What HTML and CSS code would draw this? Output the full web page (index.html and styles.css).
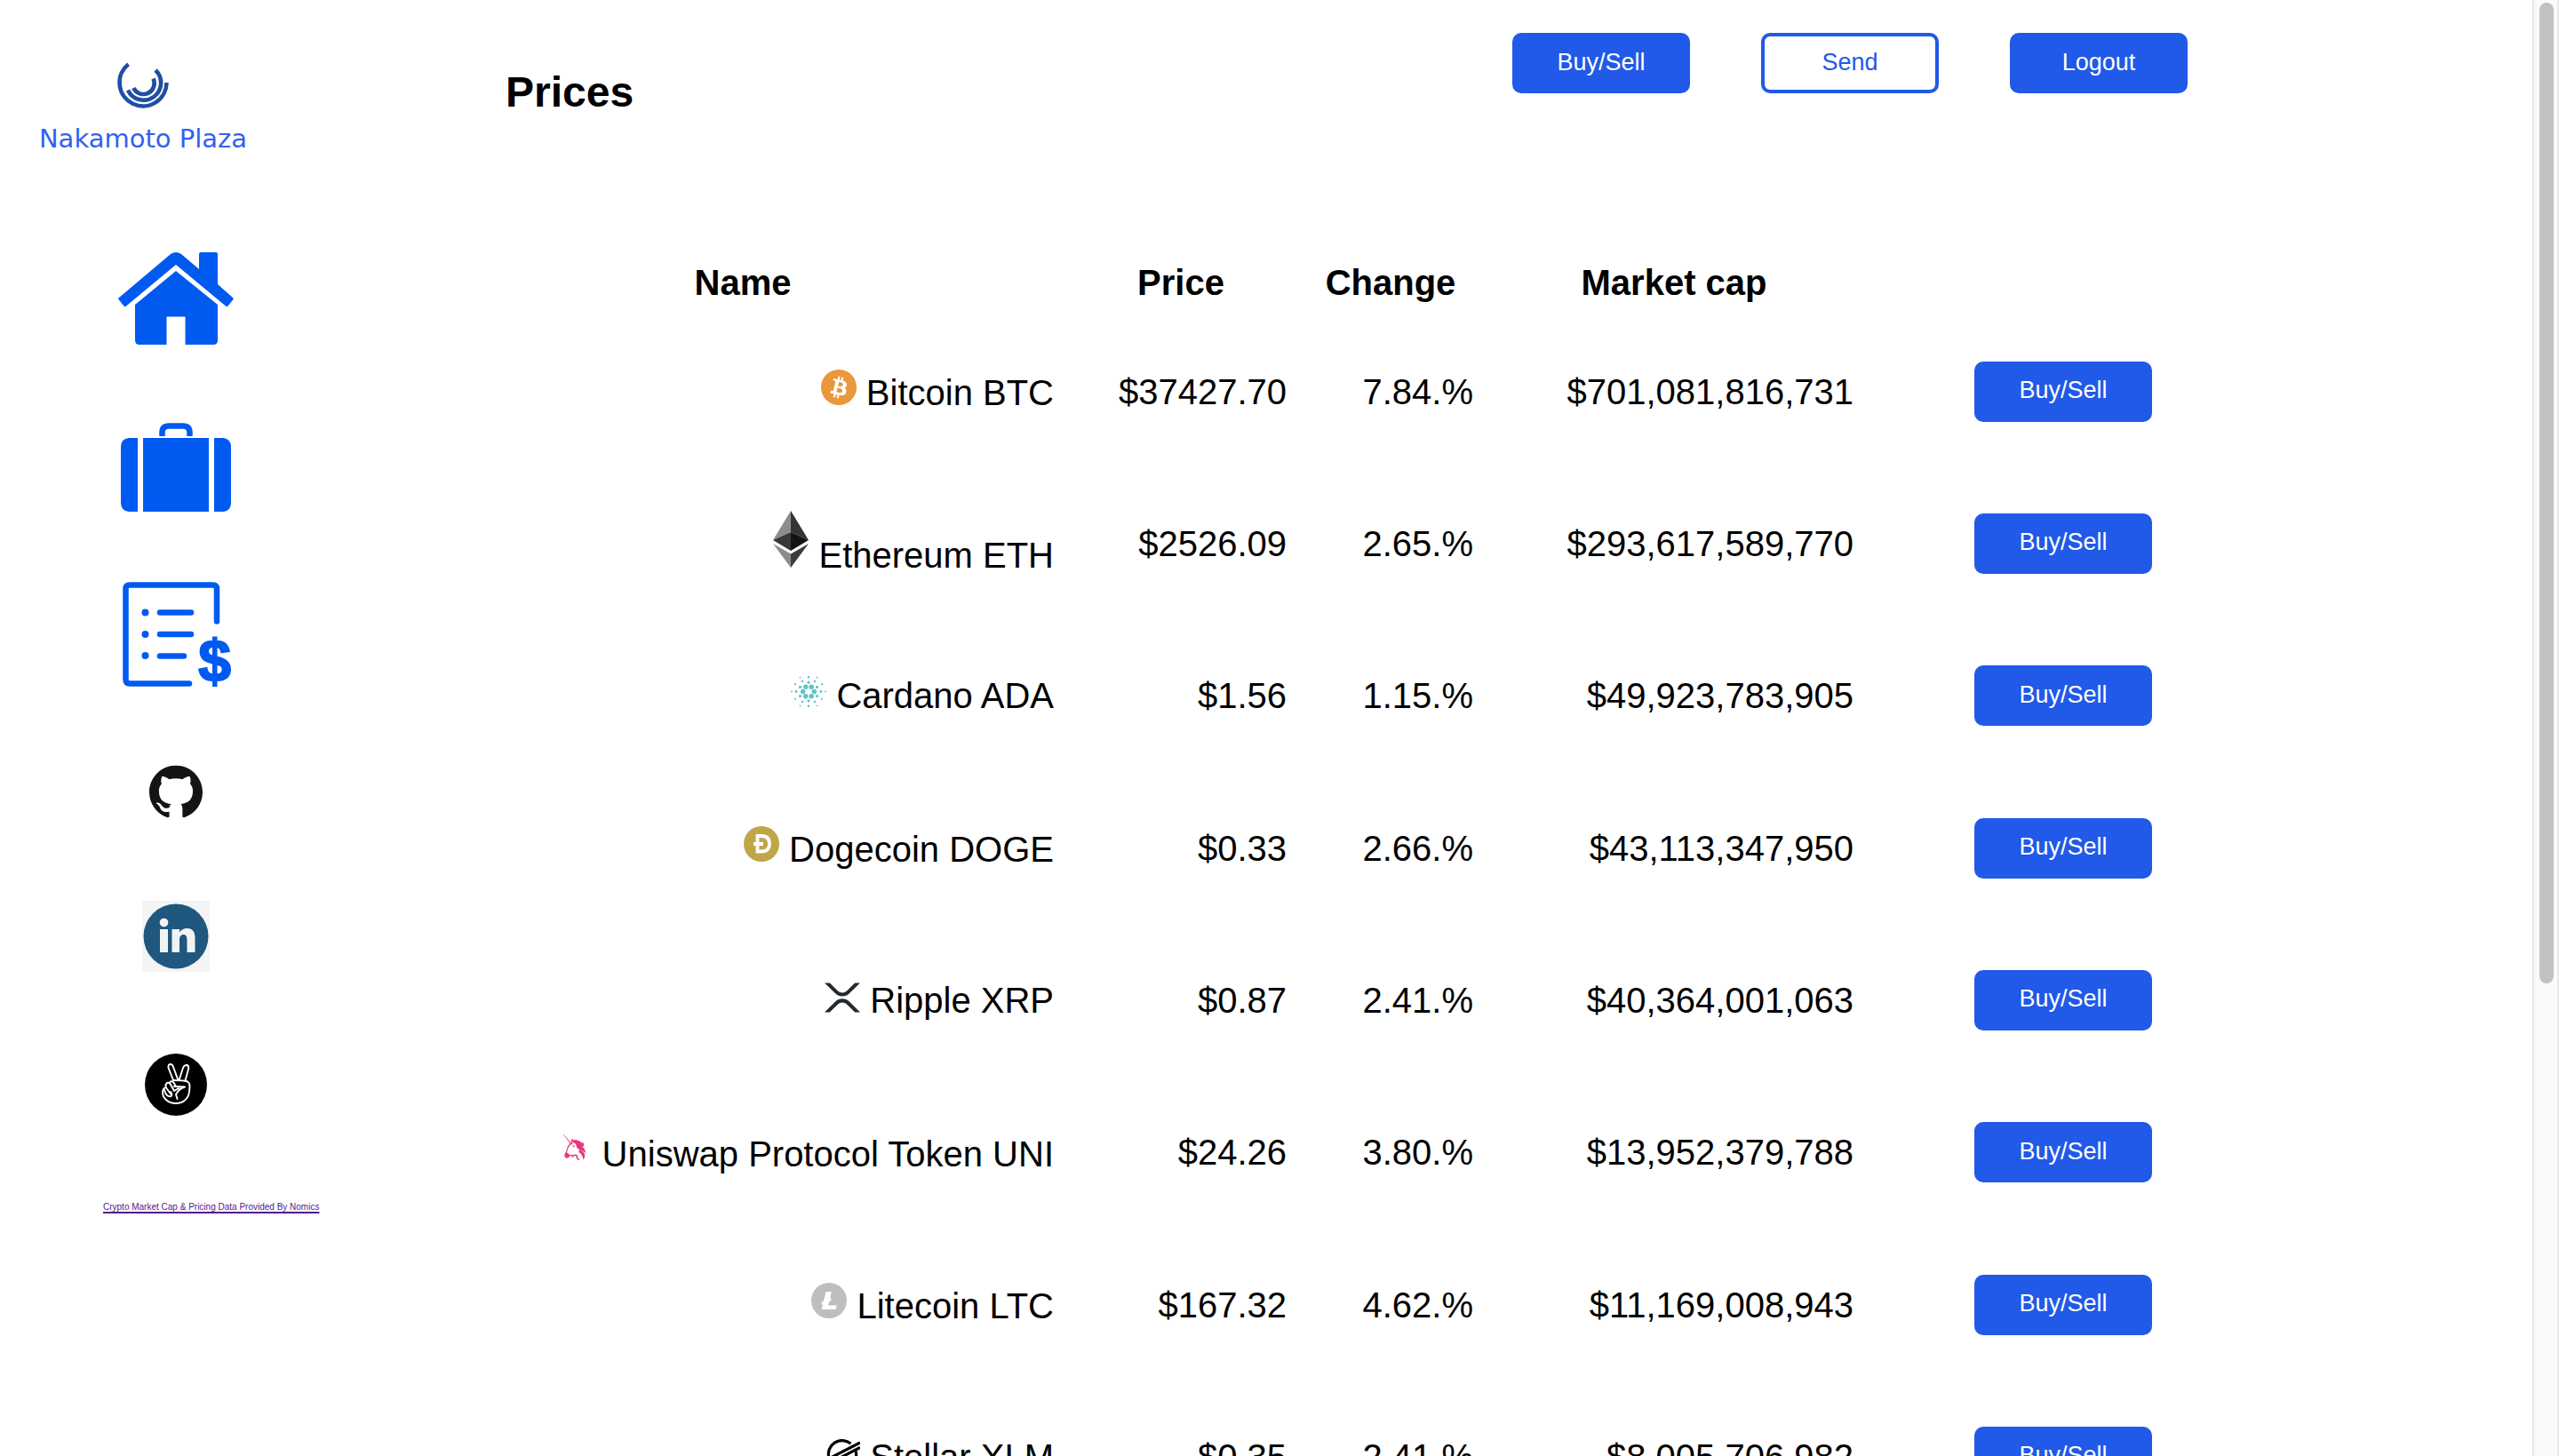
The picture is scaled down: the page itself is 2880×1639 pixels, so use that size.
FILE: index.html
```html
<!DOCTYPE html>
<html lang="en">
<head>
<meta charset="utf-8">
<title>Nakamoto Plaza</title>
<link rel="stylesheet" href="styles.css">
</head>
<body>
<div class="app">
  <aside class="sidebar">
    <a class="brand" href="#">
      <svg class="brand-mark" viewBox="0 0 60 60" aria-hidden="true">
        <g fill="none" stroke="#1f4fa3" stroke-width="4.6">
          <path d="M56.500 30A26.500 26.500 0 1 1 13.500 9.200"/>
          <path d="M44 16A19.500 19.500 0 1 1 13 38.500"/>
          <path d="M41.500 25.500A12.200 12.200 0 0 1 19.300 36"/>
        </g>
      </svg>
      <span class="brand-name">Nakamoto Plaza</span>
    </a>
    <nav class="menu">
      <a href="#" aria-label="Home">
        <svg width="130" height="112" viewBox="132 284 130 112" fill="#005af0">
          <path d="M191 286Q197 282 203 286L223 303V286Q223 284 225 284H242Q244 284 244 286V320L261 335Q262 336 261.500 337L256 344Q254.500 346 253 344.500L197 298L141 344.500Q139.500 346 138 344L132.500 337Q131.500 336 133 335Z"/>
          <path d="M197 305L244 343V383Q244 388 239 388H207.500V356.500H186.500V388H156Q151 388 151 383V343Z"/>
        </svg>
      </a>
      <a href="#" aria-label="Portfolio">
        <svg width="124" height="100" viewBox="136 477 124 100" fill="#005af0">
          <path d="M155 494H145Q136 495 136 504V567Q136 576 145 577H155ZM161 494H235V577H161ZM241 494H251Q260 495 260 504V567Q260 576 251 577H241Z"/>
          <path d="M182.500 492V488Q182.500 480.500 190 480.500H206Q213.500 480.500 213.500 488V492" fill="none" stroke="#005af0" stroke-width="6.500"/>
        </svg>
      </a>
      <a href="#" aria-label="Transactions">
        <svg width="124" height="120" viewBox="136 656 124 120">
          <g fill="none" stroke="#005af0" stroke-width="6.500" stroke-linecap="round">
            <path d="M244 699.500V663Q244 658.500 239.500 658.500H146Q141.500 658.500 141.500 663V765Q141.500 769.500 146 769.500H213"/>
            <path d="M180 689.500H215M180 714H215M180 738.500H207"/>
          </g>
          <g fill="#005af0"><circle cx="163.500" cy="689.500" r="4"/><circle cx="163.500" cy="714" r="4"/><circle cx="163.500" cy="738" r="4"/></g>
          <text class="dollar" x="241.500" y="767" text-anchor="middle">$</text>
        </svg>
      </a>
      <a href="#" aria-label="GitHub">
        <svg width="60" height="72" viewBox="0 -2 24 28.800" fill="#161314"><path d="M12 .297c-6.63 0-12 5.373-12 12 0 5.303 3.438 9.8 8.205 11.385.6.113.82-.258.82-.577 0-.285-.01-1.04-.015-2.04-3.338.724-4.042-1.61-4.042-1.61C4.422 18.07 3.633 17.7 3.633 17.7c-1.087-.744.084-.729.084-.729 1.205.084 1.838 1.236 1.838 1.236 1.07 1.835 2.809 1.305 3.495.998.108-.776.417-1.305.76-1.605-2.665-.3-5.466-1.332-5.466-5.93 0-1.31.465-2.38 1.235-3.22-.135-.303-.54-1.523.105-3.176 0 0 1.005-.322 3.3 1.23.96-.267 1.98-.399 3-.405 1.02.006 2.04.138 3 .405 2.28-1.552 3.285-1.23 3.285-1.23.645 1.653.24 2.873.12 3.176.765.84 1.23 1.91 1.23 3.22 0 4.61-2.805 5.625-5.475 5.92.42.36.81 1.096.81 2.22 0 1.606-.015 2.896-.015 3.286 0 .315.21.69.825.57C20.565 22.092 24 17.592 24 12.297c0-6.627-5.373-12-12-12"/></svg>
      </a>
      <a href="#" aria-label="LinkedIn">
        <svg width="76" height="92" viewBox="0 1 76 92">
          <path d="M0 7H76V87H0Z" fill="#f4f4f4"/>
          <circle cx="38" cy="47" r="36.500" fill="#20577f"/>
          <g fill="#f1f3f3">
            <circle cx="24.500" cy="31.500" r="4.800"/>
            <path d="M20 39H29V65H20ZM33.500 39H42V42.500C44 39.500 47 38 50.500 38C57 38 59.500 42 59.500 49V65H50.500V51C50.500 47.500 49.500 45 46.500 45C43.500 45 42 47.500 42 51V65H33.500Z"/>
          </g>
        </svg>
      </a>
      <a href="#" aria-label="AngelList">
        <svg width="70" height="84" viewBox="0 -6 70 84">
          <circle cx="35" cy="35" r="35" fill="#000"/>
          <g fill="none" stroke="#fff" stroke-width="1.900" stroke-linejoin="round" stroke-linecap="round">
            <path d="M32 30L26.500 16Q26 12 29 12Q31 12 32 15L37.500 30"/>
            <path d="M38.500 30L43 16Q44.500 12.500 47.500 13Q50 14 49 17.500L45.500 30.500"/>
            <path d="M32 30C37 30 45 30.500 48 31.500C51.500 33 50.500 38 50 43C49 51 43 56 35 56C26 56 20 50 20 43.500C20 40 22 38 24 38.500C22 34 26 31 28.500 34"/>
            <path d="M24 38.500L29.500 46M28.500 34L33 42M28 33Q29 30 32 32L35 37M22 41C23 46 26 49 29.500 48C31 47 30.500 45 29 43M33 37L45 37.500C40 39 37 42 35 46L36.500 51M33 42L38 39"/>
          </g>
        </svg>
      </a>
    </nav>
    <a class="credit" href="#">Crypto Market Cap &amp; Pricing Data Provided By Nomics</a>
  </aside>

  <main class="main">
    <header class="topbar">
      <h1>Prices</h1>
      <div class="actions">
        <button class="btn" type="button">Buy/Sell</button>
        <button class="btn btn-outline" type="button">Send</button>
        <button class="btn" type="button">Logout</button>
      </div>
    </header>

    <table class="prices">
      <colgroup><col class="c-name"><col class="c-price"><col class="c-change"><col class="c-cap"><col></colgroup>
      <thead>
        <tr><th>Name</th><th>Price</th><th>Change</th><th>Market cap</th><td></td></tr>
      </thead>
      <tbody>
        <tr>
          <td><svg width="40" height="40" viewBox="0 0 32 32"><circle cx="16" cy="16" r="16" fill="#ea973d"/><path fill="#fff" d="M23.189 14.02c.314-2.096-1.283-3.223-3.465-3.975l.708-2.84-1.728-.43-.69 2.765c-.454-.114-.92-.22-1.385-.326l.695-2.783L15.596 6l-.708 2.839c-.376-.086-.746-.17-1.104-.26l.002-.009-2.384-.595-.46 1.846s1.283.294 1.256.312c.7.175.826.638.805 1.006l-.806 3.235c.048.012.11.03.18.057l-.183-.045-1.13 4.532c-.086.212-.303.531-.793.41.018.025-1.256-.313-1.256-.313l-.858 1.978 2.25.561c.418.105.828.215 1.231.318l-.715 2.872 1.727.43.708-2.84c.472.127.93.245 1.378.357l-.706 2.828 1.728.43.715-2.866c2.948.558 5.164.333 6.097-2.333.752-2.146-.037-3.385-1.588-4.192 1.13-.26 1.98-1.003 2.207-2.538zm-3.95 5.538c-.533 2.147-4.148.986-5.32.695l.95-3.805c1.172.293 4.929.872 4.37 3.11zm.535-5.569c-.487 1.953-3.495.96-4.47.717l.86-3.45c.975.243 4.118.696 3.61 2.733z"/></svg> Bitcoin BTC</td>
          <td>$37427.70</td><td>7.84.%</td><td>$701,081,816,731</td>
          <td><button class="btn" type="button">Buy/Sell</button></td>
        </tr>
        <tr>
          <td><svg width="40" height="64" viewBox="0 0 40 64"><path fill="#8c8c8c" d="M20 0L0 33L20 24Z"/><path fill="#343434" d="M20 0L40 33L20 24Z"/><path fill="#393939" d="M20 24L0 33L20 45Z"/><path fill="#141414" d="M20 24L40 33L20 45Z"/><path fill="#8c8c8c" d="M0 37L20 48.500V64Z"/><path fill="#3c3c3b" d="M40 37L20 48.500V64Z"/></svg> Ethereum ETH</td>
          <td>$2526.09</td><td>2.65.%</td><td>$293,617,589,770</td>
          <td><button class="btn" type="button">Buy/Sell</button></td>
        </tr>
        <tr>
          <td><svg width="40" height="36" viewBox="0 0 40 36" fill="#5fc4c9">
            <g><circle cx="26.300" cy="17.500" r="2.700"/><circle cx="13.700" cy="17.500" r="2.700"/><circle cx="16.800" cy="12.300" r="2.700"/><circle cx="23.200" cy="12.300" r="2.700"/><circle cx="16.800" cy="22.700" r="2.700"/><circle cx="23.200" cy="22.700" r="2.700"/></g>
            <g><circle cx="20" cy="7.200" r="1.600"/><circle cx="20" cy="27.800" r="1.600"/><circle cx="10.500" cy="12.400" r="1.600"/><circle cx="29.500" cy="12.400" r="1.600"/><circle cx="10.500" cy="22.600" r="1.600"/><circle cx="29.500" cy="22.600" r="1.600"/></g>
            <g><circle cx="6" cy="17.500" r="1.400"/><circle cx="34" cy="17.500" r="1.400"/><circle cx="13" cy="6" r="1.300"/><circle cx="27" cy="6" r="1.300"/><circle cx="13" cy="29" r="1.300"/><circle cx="27" cy="29" r="1.300"/></g>
            <g><circle cx="20" cy="1.200" r="1.200"/><circle cx="20" cy="33.800" r="1.200"/><circle cx="5" cy="9.200" r="1.100"/><circle cx="35" cy="9.200" r="1.100"/><circle cx="5" cy="25.800" r="1.100"/><circle cx="35" cy="25.800" r="1.100"/></g>
            <g><circle cx=".9" cy="17.500" r=".9"/><circle cx="39.100" cy="17.500" r=".9"/><circle cx="10.500" cy="1.700" r=".9"/><circle cx="29.500" cy="1.700" r=".9"/><circle cx="10.500" cy="33.300" r=".9"/><circle cx="29.500" cy="33.300" r=".9"/></g>
          </svg> Cardano ADA</td>
          <td>$1.56</td><td>1.15.%</td><td>$49,923,783,905</td>
          <td><button class="btn" type="button">Buy/Sell</button></td>
        </tr>
        <tr>
          <td><svg width="40" height="40" viewBox="0 0 40 40"><circle cx="20" cy="20" r="20" fill="#bfa648"/><path fill="none" stroke="#fff" stroke-width="3.800" d="M15.500 28.500V11H20Q29 11 29 19.800Q29 28.500 20 28.500ZM11 20H22"/></svg> Dogecoin DOGE</td>
          <td>$0.33</td><td>2.66.%</td><td>$43,113,347,950</td>
          <td><button class="btn" type="button">Buy/Sell</button></td>
        </tr>
        <tr>
          <td><svg width="40" height="34" viewBox="0 0 512 424" fill="#23292f"><path d="M437 0h74L357 152.480c-55.770 55.190-146.190 55.190-202 0L.94 0H75l117 115.830a91.110 91.110 0 0 0 127.910 0ZM74.050 424H0l155-153.420c55.770-55.190 146.190-55.190 202 0L512 424h-74L320 307.230a91.110 91.110 0 0 0-127.910 0Z"/></svg> Ripple XRP</td>
          <td>$0.87</td><td>2.41.%</td><td>$40,364,001,063</td>
          <td><button class="btn" type="button">Buy/Sell</button></td>
        </tr>
        <tr>
          <td><svg width="40" height="40" viewBox="0 0 40 40">
            <path d="M7 4L17.500 15L15.500 15.500Z" fill="#f37fab" stroke="#f37fab" stroke-width=".6"/>
            <path d="M16 15L17 10L19.500 13.500" fill="none" stroke="#e8357d" stroke-width="1.400"/>
            <path d="M15 14C12.500 17 11 20 10.500 24L9 27C9 29.500 11 30.500 13 29C14 27.500 15.500 27 17.500 27.500" fill="none" stroke="#e8357d" stroke-width="1.200"/>
            <path d="M9 25Q11 23.500 14 27Q13.500 31 10 30.500Q8 28.500 9 25ZM17 17L20 16L19 18.500ZM18 10.500C22 9.500 26 11 28 14L28.500 12C30.500 14 29.500 15.500 30.500 17.500C26 18 23 15.500 19.500 14ZM21 15C27 16 32 19 32 25C29 22 26 21.500 22.500 19.500ZM24.500 21C31 23 33 28 29.500 32.500C29 29 28 26 24.500 24Z" fill="#e8357d"/>
            <path d="M16.500 29.500Q20 26 22.500 28Q21 31 25 32.500" fill="none" stroke="#e8357d" stroke-width="1.500"/>
          </svg> Uniswap Protocol Token UNI</td>
          <td>$24.26</td><td>3.80.%</td><td>$13,952,379,788</td>
          <td><button class="btn" type="button">Buy/Sell</button></td>
        </tr>
        <tr>
          <td><svg width="40" height="40" viewBox="0 0 32 32"><circle cx="16" cy="16" r="16" fill="#bebebe"/><path fill="#fff" d="M10.427 19.214L9 19.768l.688-2.759 1.444-.58L13.213 8h5.129l-1.519 6.196 1.410-.571-.68 2.750-1.427.571-.848 3.483H23L22.127 24H9.252z"/></svg> Litecoin LTC</td>
          <td>$167.32</td><td>4.62.%</td><td>$11,169,008,943</td>
          <td><button class="btn" type="button">Buy/Sell</button></td>
        </tr>
        <tr>
          <td><svg width="40" height="34" viewBox="0 0 40 34"><g fill="none" stroke="#000" stroke-width="3.200"><path d="M4.800 20.500A15.400 15.400 0 0 1 29.500 5"/><path d="M35.200 13.500A15.400 15.400 0 0 1 10.500 29"/><path d="M0 24.500L40 4M0 30L40 9.500"/></g></svg> Stellar XLM</td>
          <td>$0.35</td><td>2.41.%</td><td>$8,005,706,982</td>
          <td><button class="btn" type="button">Buy/Sell</button></td>
        </tr>
      </tbody>
    </table>
  </main>

  <div class="scrollbar" aria-hidden="true"><div class="thumb"></div></div>
</div>
</body>
</html>
```
FILE: styles.css
```css
* { box-sizing: border-box; }

body {
  margin: 0;
  background: #fff;
  color: #000;
  font-family: "Liberation Sans", Arial, sans-serif;
}

.app {
  display: flex;
  height: 100vh;
  overflow: hidden;
}

.sidebar {
  flex: none;
  width: 440px;
  padding-top: 63px;
}

.brand {
  display: flex;
  flex-direction: column;
  align-items: center;
  width: 322px;
  height: 221px;
  text-decoration: none;
}

.brand-mark { width: 60px; height: 60px; }

.brand-name {
  margin-top: 17px;
  font-family: "DejaVu Sans", sans-serif;
  font-size: 29px;
  line-height: 32px;
  color: #2f62ee;
  white-space: nowrap;
}

.menu {
  display: flex;
  flex-direction: column;
  align-items: center;
  gap: 80px;
  width: 396px;
}

.menu a, .menu svg { display: block; }
.menu svg { overflow: visible; }

.dollar {
  font-family: "Liberation Sans", Arial, sans-serif;
  font-size: 66px;
  font-weight: 700;
  fill: #005af0;
  stroke: #005af0;
  stroke-width: 2px;
}

.credit {
  display: block;
  margin: 80px 0 0 116px;
  font-size: 10px;
  line-height: 30px;
  color: #551a8b;
  text-decoration-thickness: 2px;
  text-underline-offset: 2px;
  white-space: nowrap;
}

.main {
  flex: 1;
  padding: 37px 388px 0 22px;
}

.topbar {
  display: flex;
  justify-content: space-between;
  align-items: flex-start;
  margin-bottom: 148px;
  padding-left: 107px;
}

h1 {
  margin: 39px 0 0;
  font-size: 48px;
  line-height: 56px;
}

.actions { display: flex; gap: 80px; }

.btn {
  display: block;
  width: 200px;
  height: 68px;
  padding: 0 0 2px;
  border: 4px solid #2159e8;
  border-radius: 10px;
  background: #2159e8;
  color: #fff;
  font-family: inherit;
  font-size: 27px;
}

.btn-outline {
  background: #fff;
  color: #2159e8;
}

.prices {
  width: 100%;
  table-layout: fixed;
  border-collapse: separate;
  border-spacing: 24px 0;
  font-size: 40px;
  line-height: 46px;
}

.c-name { width: 700px; }
.c-price { width: 238px; }
.c-change { width: 186px; }
.c-cap { width: 404px; }

.prices th, .prices td { padding: 0; white-space: nowrap; }
.prices th { text-align: center; }
.prices td { text-align: right; vertical-align: middle; }
.prices td:last-child { padding-left: 112px; }

.prices thead tr { height: 75px; }
.prices tbody tr { height: 171px; }
.prices tbody tr:nth-child(3n) { height: 172px; }

.scrollbar {
  flex: none;
  width: 30px;
  padding: 3px 0 0 6px;
  border: solid #e8e8e8;
  border-width: 0 2px;
  background: #fafafa;
}

.thumb {
  width: 16px;
  height: 1104px;
  border-radius: 8px;
  background: #c1c1c1;
}
```
